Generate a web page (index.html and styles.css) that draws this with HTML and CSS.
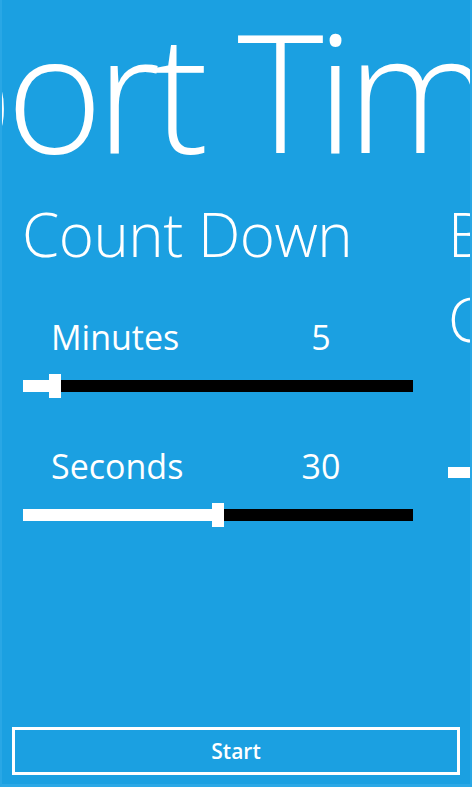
FILE: index.html
```html
<!DOCTYPE html>
<html lang="en">
<head>
<meta charset="utf-8">
<title>Sport Timer</title>
<link rel="stylesheet" href="styles.css">
</head>
<body>
<div class="screen">
  <h1 class="app-title">Sport Timer</h1>
  <div class="panels">
    <section class="panel panel-main">
      <h2 class="panel-title">Count Down</h2>
      <div class="field-row field-first">
        <span class="field-label">Minutes</span>
        <span class="field-value">5</span>
      </div>
      <div class="slider">
        <div class="slider-fill" style="width:26px"></div>
        <div class="slider-thumb"></div>
        <div class="slider-rest"></div>
      </div>
      <div class="field-row">
        <span class="field-label">Seconds</span>
        <span class="field-value">30</span>
      </div>
      <div class="slider">
        <div class="slider-fill" style="width:189px"></div>
        <div class="slider-thumb"></div>
        <div class="slider-rest"></div>
      </div>
    </section>
    <section class="panel panel-next">
      <h2 class="panel-title">Break</h2>
      <div class="panel-subtitle">Cycles</div>
      <div class="next-bar"></div>
    </section>
  </div>
  <div class="app-bar">
    <button class="start-button" type="button">Start</button>
  </div>
</div>
</body>
</html>
```
FILE: styles.css
```css
html, body {
  margin: 0;
  padding: 0;
}
body {
  background: #1ba1e2;
  font-family: "Open Sans", "Noto Sans", "DejaVu Sans", sans-serif;
  color: #ffffff;
}
.screen {
  width: 472px;
  height: 787px;
  box-sizing: border-box;
  background: #1ba0e1;
  border-left: 2px solid #29a7e5;
  border-right: 2px solid #29a7e5;
  border-bottom: 3px solid #2ba8e6;
  overflow: hidden;
  display: flex;
  flex-direction: column;
}
.app-title {
  margin: 7px 0 0 -170px;
  font-size: 165px;
  line-height: 165px;
  font-weight: 300;
  white-space: nowrap;
  letter-spacing: -7px;
}
.panels {
  display: flex;
  margin-left: -2px;
}
.panel {
  flex: none;
}
.panel-main {
  width: 426px;
  padding-left: 22px;
}
.panel-next {
  width: 200px;
}
.panel-title {
  margin: 32px 0 0 0;
  font-size: 60px;
  line-height: 60px;
  font-weight: 300;
  white-space: nowrap;
  letter-spacing: -0.5px;
}
.panel-subtitle {
  margin-top: 25px;
  font-size: 60px;
  line-height: 60px;
  font-weight: 300;
  white-space: nowrap;
}
.next-bar {
  margin-top: 118px;
  width: 40px;
  height: 11px;
  background: #ffffff;
}
.field-row {
  display: flex;
  align-items: baseline;
  padding-left: 29px;
  margin-top: 48px;
  font-size: 34px;
  line-height: 40px;
}
.field-first {
  margin-top: 53px;
}
.field-label {
  width: 229px;
}
.field-value {
  width: 82px;
  text-align: center;
}
.slider {
  display: flex;
  align-items: center;
  width: 390px;
  height: 24px;
  margin-top: 17px;
  margin-left: 1px;
}
.slider-fill {
  height: 12px;
  background: #ffffff;
}
.slider-thumb {
  width: 12px;
  height: 24px;
  background: #ffffff;
}
.slider-rest {
  flex: 1;
  height: 12px;
  background: #000000;
}
.app-bar {
  margin-top: auto;
  padding: 0 10px 9px 10px;
}
.start-button {
  display: block;
  width: 100%;
  height: 48px;
  box-sizing: border-box;
  border: 3px solid #ffffff;
  background: transparent;
  color: #ffffff;
  font-family: "Open Sans", "Noto Sans", sans-serif;
  font-size: 21px;
  font-weight: 600;
  line-height: 40px;
  padding: 0;
}
```
